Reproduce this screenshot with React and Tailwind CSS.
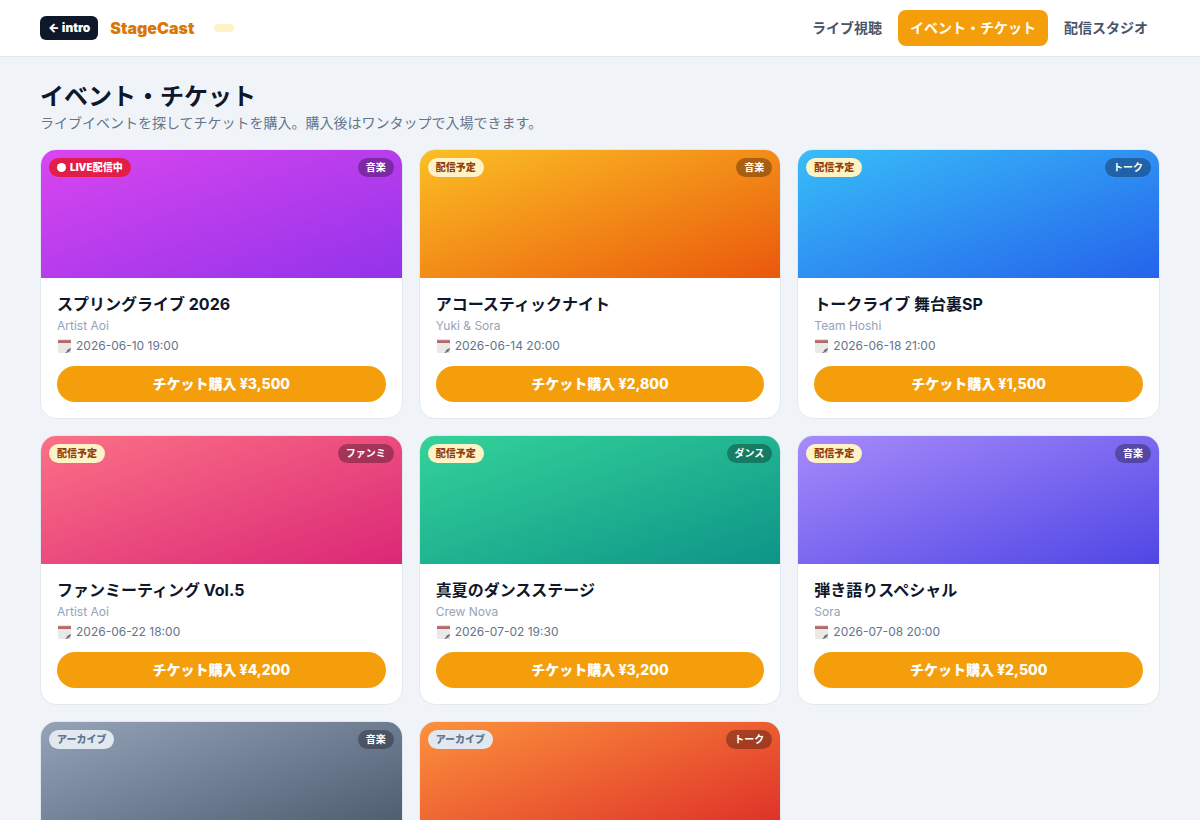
import React, { useState } from 'react';

const navItems = ['ライブ視聴', 'イベント・チケット', '配信スタジオ'];

const events = [
  { id: 1, status: 'live', genre: '音楽', cover: 'from-[#d946ef] to-[#9333ea]', title: 'スプリングライブ 2026', artist: 'Artist Aoi', date: '2026-06-10 19:00', price: 3500 },
  { id: 2, status: 'upcoming', genre: '音楽', cover: 'from-[#fbbf24] to-[#ea580c]', title: 'アコースティックナイト', artist: 'Yuki & Sora', date: '2026-06-14 20:00', price: 2800 },
  { id: 3, status: 'upcoming', genre: 'トーク', cover: 'from-[#38bdf8] to-[#2563eb]', title: 'トークライブ 舞台裏SP', artist: 'Team Hoshi', date: '2026-06-18 21:00', price: 1500 },
  { id: 4, status: 'upcoming', genre: 'ファンミ', cover: 'from-[#fb7185] to-[#db2777]', title: 'ファンミーティング Vol.5', artist: 'Artist Aoi', date: '2026-06-22 18:00', price: 4200 },
  { id: 5, status: 'upcoming', genre: 'ダンス', cover: 'from-[#34d399] to-[#0d9488]', title: '真夏のダンスステージ', artist: 'Crew Nova', date: '2026-07-02 19:30', price: 3200 },
  { id: 6, status: 'upcoming', genre: '音楽', cover: 'from-[#a78bfa] to-[#4f46e5]', title: '弾き語りスペシャル', artist: 'Sora', date: '2026-07-08 20:00', price: 2500 },
  { id: 7, status: 'archive', genre: '音楽', cover: 'from-[#94a3b8] to-[#475569]' },
  { id: 8, status: 'archive', genre: 'トーク', cover: 'from-[#fb923c] to-[#dc2626]' },
];

const statusBadges = {
  live: { label: 'LIVE配信中', className: 'bg-[#e11d48] text-white' },
  upcoming: { label: '配信予定', className: 'bg-[#fef3c7] text-[#92400e]' },
  archive: { label: 'アーカイブ', className: 'bg-[#e2e8f0] text-[#64748b]' },
};

// Small tear-off calendar with a curled corner
const CalendarIcon = () => (
  <svg viewBox="0 0 15 15" className="w-[15px] h-[15px] flex-shrink-0" aria-hidden="true">
    <path d="M1 3h13v6.5L9 14H2a1 1 0 0 1-1-1z" fill="#ebe9e7" />
    <path d="M1 1h13v3H1z" fill="#b4686a" />
    <path d="M1 .4h13v.9H1z" fill="#d3c3c3" />
    <path d="M14 9c0 2.8-2 5-6 5 1.8-.8 1.600-1.800 2.200-3 .6-1 2.100-1.200 3.800-2z" fill="#73777d" />
    <path d="M14 11v3h-3.200c1.600-.4 2.700-1.500 3.200-3z" fill="#e3e3e3" />
  </svg>
);

const EventCard = ({ event }) => {
  const badge = statusBadges[event.status];

  return (
    <article className="bg-white rounded-2xl border border-[#e2e8f0] overflow-hidden">
      {/* Cover with the status and genre badges */}
      <div className={`h-32 p-2 flex items-start justify-between bg-linear-to-br/srgb ${event.cover}`}>
        <span className={`flex items-center gap-1 rounded-full px-2 py-0.5 text-[10px] leading-[15px] font-black ${badge.className}`}>
          {event.status === 'live' && <span className="w-[9px] h-[9px] rounded-full bg-white"></span>}
          {badge.label}
        </span>
        <span className="rounded-full px-2 py-0.5 text-[10px] leading-[15px] font-bold bg-black/30 text-white">
          {event.genre}
        </span>
      </div>

      {event.title && (
        <div className="p-4">
          <h2 className="text-base leading-5 font-bold text-[#0f172a]">{event.title}</h2>
          <p className="mt-1 text-xs text-[#94a3b8]">{event.artist}</p>
          <p className="mt-1 flex items-center gap-1 text-xs text-[#64748b]">
            <CalendarIcon />
            {event.date}
          </p>
          <button
            type="button"
            className="mt-3 w-full rounded-full bg-[#f59e0b] py-2 text-sm font-extrabold text-white hover:bg-[#d97706]"
          >
            チケット購入 ¥{event.price.toLocaleString('en-US')}
          </button>
        </div>
      )}
    </article>
  );
};

const App = () => {
  const [active, setActive] = useState('イベント・チケット');

  return (
    <div className="min-h-screen bg-[#f0f4f9] text-[#0f172a] font-[Inter,'Noto_Sans_CJK_JP',sans-serif]">
      <header className="bg-white border-b border-[#e2e8f0]">
        <div className="h-14 px-10 flex items-center justify-between">
          <div className="flex items-center gap-3">
            <a href="#intro" className="rounded-md bg-[#0f172a] px-2 py-1 text-xs font-black text-white">
              ← intro
            </a>
            <span className="text-base font-black text-[#d97706]">StageCast</span>
            <span className="ml-2 rounded-full bg-[#fef3c7] px-2.5 py-1"></span>
          </div>
          <nav className="flex items-center gap-1">
            {navItems.map(item => (
              <button
                key={item}
                type="button"
                onClick={() => setActive(item)}
                className={`rounded-lg px-3 py-2 text-sm font-bold ${
                  item === active ? 'bg-[#f59e0b] text-white' : 'text-[#475569]'
                }`}
              >
                {item}
              </button>
            ))}
          </nav>
        </div>
      </header>

      <main className="px-10 py-6">
        <h1 className="text-2xl font-bold">イベント・チケット</h1>
        <p className="text-sm text-[#64748b]">
          ライブイベントを探してチケットを購入。購入後はワンタップで入場できます。
        </p>
        <div className="mt-4 grid grid-cols-3 gap-4">
          {events.map(event => <EventCard key={event.id} event={event} />)}
        </div>
      </main>
    </div>
  );
};

export default App;
